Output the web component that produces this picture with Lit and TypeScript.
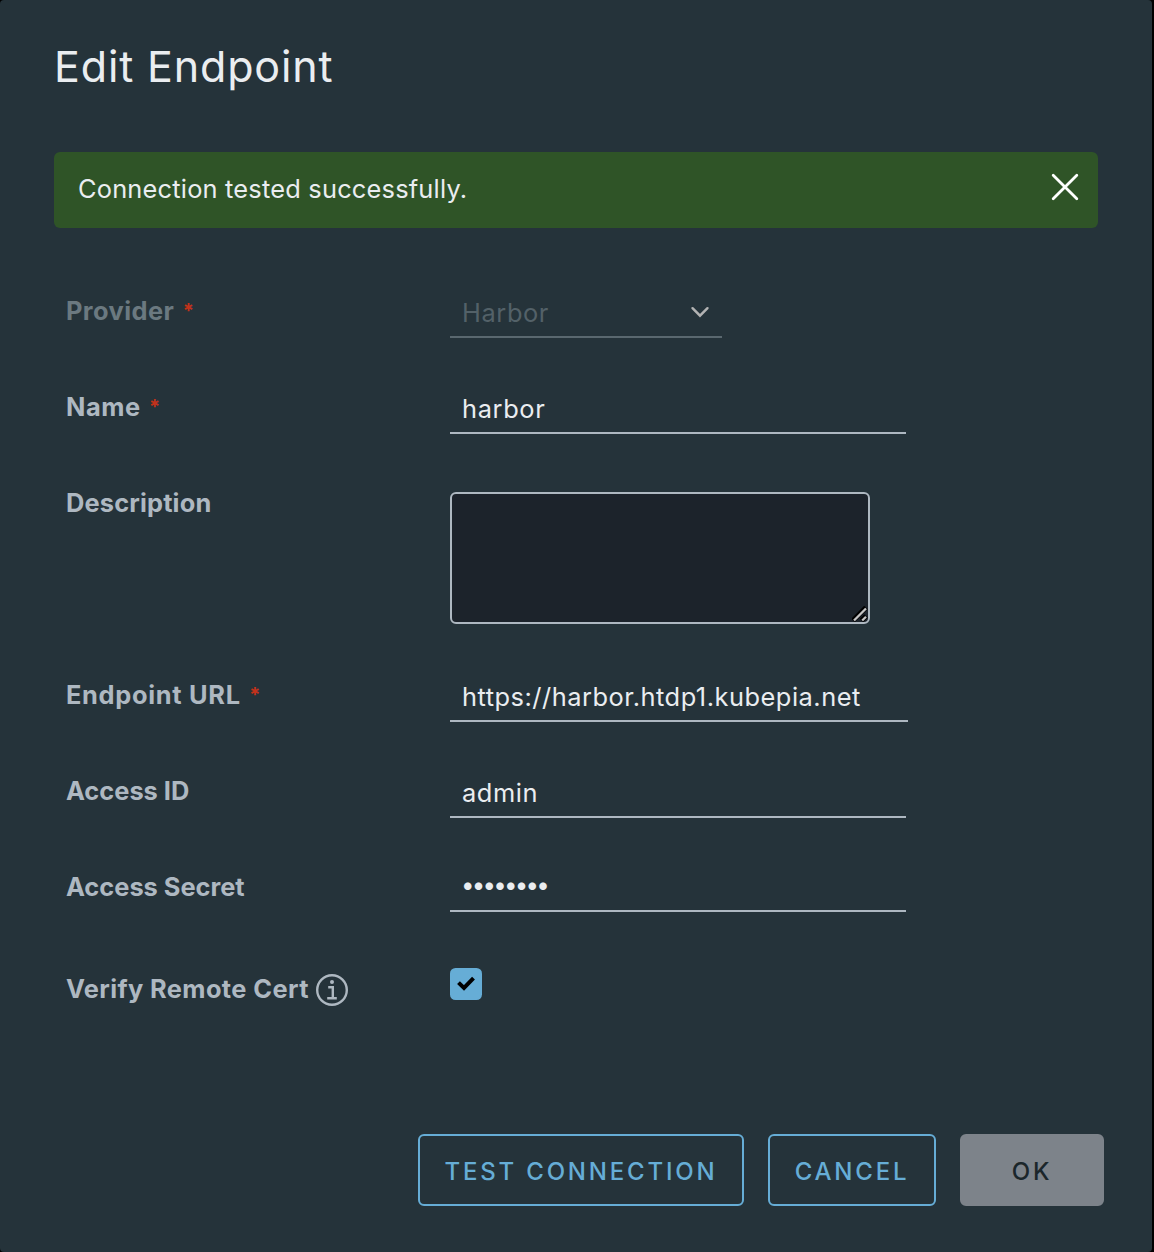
import { LitElement, html, css, nothing, TemplateResult } from "lit";
import { customElement, property } from "lit/decorators.js";

@customElement("form-row")
class FormRow extends LitElement {
  @property() label = "";
  @property({ type: Number }) tracking = 0;
  @property({ type: Boolean }) required = false;
  @property({ type: Boolean, reflect: true }) muted = false;

  static styles = css`
    :host { display: grid; grid-template-columns: 384px 1fr; align-items: start; padding-left: 12px; }
    .label { display: flex; align-items: center; height: 46px; font-size: 25.4px; line-height: 46px; font-weight: 660; color: #aeb8c1; white-space: nowrap; }
    :host([muted]) .label { color: #6b7980; }
    .star { color: #c2321b; font: 700 20px/46px "Inter", sans-serif; margin-left: 8.5px; height: 46px; }
  `;

  render() {
    return html`
      <div class="label">
        <span style="letter-spacing:${this.tracking}px">${this.label}</span>
        ${this.required ? html`<span class="star">*</span>` : nothing}
        <slot name="hint"></slot>
      </div>
      <slot></slot>
    `;
  }
}

@customElement("app-root")
class AppRoot extends LitElement {
  static styles = css`
    :host { display: block; background: #000; font-family: "Inter", sans-serif; color: #eaedf0; }
    * { box-sizing: border-box; }
    .modal { width: 1152px; height: 1252px; background: #25333a; border-radius: 4px; padding: 36px 48px 46px 54px; display: flex; flex-direction: column; }
    .title { margin: 0; height: 116px; font-size: 43px; font-weight: 400; line-height: 60px; letter-spacing: .85px; }
    .alert { width: 1044px; height: 76px; background: #2f5427; border-radius: 6px; display: flex; align-items: center; justify-content: space-between; padding: 0 18px 0 24px; font-size: 25.4px; font-weight: 430; letter-spacing: .2px; margin-bottom: 60px; }
    .alert span { padding-bottom: 4px; }
    .close { width: 30px; height: 30px; margin-bottom: 6px; }
    .row { height: 96px; }
    .row.tall { height: 192px; }
    .field { height: 50px; padding: 1px 12px; border: 0; border-bottom: 2px solid #aeb8c1; border-radius: 0; outline: 0; background: transparent; color: #eaedf0; font: 430 25.4px/46px "Inter", sans-serif; width: 456px; }
    .url { width: 458px; }
    .secret { height: 48px; padding: 0 11px; font-size: 24px; line-height: 42px; letter-spacing: -2.75px; }
    .select { width: 272px; padding: 2px 12px 0; display: flex; justify-content: space-between; align-items: center; color: #536168; border-color: #5a686f; letter-spacing: .6px; }
    .chevron { width: 20px; height: 14px; margin: 0 0 2px 0; }
    .area { position: relative; width: 420px; height: 132px; margin-top: 12px; }
    .area textarea { display: block; width: 100%; height: 100%; resize: none; background: #1c232b; border: 2px solid #aeb8c1; border-radius: 6px; outline: 0; }
    .grip { position: absolute; right: 2px; bottom: 2px; width: 16px; height: 16px; }
    .info { width: 32px; height: 32px; margin-left: 7px; margin-top: 1px; display: block; }
    .verify { padding-top: 6px; height: 96px; }
    .check { width: 32px; height: 32px; margin-top: 2px; display: block; }
    .actions { margin-top: auto; display: flex; justify-content: flex-end; gap: 24px; }
    .btn { height: 72px; border: 2px solid #66add6; border-radius: 6px; background: transparent; color: #66add6; font: 540 24px/64px "Inter", sans-serif; letter-spacing: 2.8px; padding: 4px 0 0; text-align: center; white-space: nowrap; }
    .test { width: 326px; }
    .cancel { width: 168px; }
    .ok { width: 144px; background: #7d838a; border-color: #7d838a; color: #1b262b; }
  `;

  private input(value: string, tracking: number, kind = ""): TemplateResult {
    return html`<input class="field ${kind}" .value=${value} style="letter-spacing:${tracking}px" />`;
  }

  render() {
    return html`
      <div class="modal">
        <h3 class="title">Edit Endpoint</h3>
        <div class="alert">
          <span>Connection tested successfully.</span>
          <svg class="close" viewBox="0 0 30 30" fill="none" stroke="#fff" stroke-width="2.8" stroke-linecap="round"><path d="M3.2 3.2 26.8 26.8M26.8 3.2 3.2 26.8" /></svg>
        </div>
        <form-row class="row" label="Provider" tracking="0.42" required muted>
          <div class="field select">
            <span>Harbor</span>
            <svg class="chevron" viewBox="0 0 20 14" fill="none" stroke="#b3b3b3" stroke-width="2.4" stroke-linecap="round"><path d="M2.5 3.2 10 10.7 17.5 3.2" /></svg>
          </div>
        </form-row>
        <form-row class="row" label="Name" tracking="0.55" required>${this.input("harbor", 0.65)}</form-row>
        <form-row class="row tall" label="Description" tracking="0.16">
          <div class="area">
            <textarea></textarea>
            <svg class="grip" viewBox="0 0 16 16" fill="none"><path d="M1 14.5 14 1.5M9.5 14.5 14 10" stroke="#000" stroke-width="5" /><path d="M2 14.5 14 2.5M10.2 14.5 14 10.7" stroke="#c4c4c4" stroke-width="2.3" /></svg>
          </div>
        </form-row>
        <form-row class="row" label="Endpoint URL" tracking="0.69" required>${this.input("https://harbor.htdp1.kubepia.net", 0.51, "url")}</form-row>
        <form-row class="row" label="Access ID" tracking="0">${this.input("admin", 0.6)}</form-row>
        <form-row class="row" label="Access Secret" tracking="0">
          <div class="field secret">••••••••</div>
        </form-row>
        <form-row class="verify" label="Verify Remote Cert" tracking="0.39">
          <svg slot="hint" class="info" viewBox="0 0 32 32" fill="none" stroke="#aeb8c1" stroke-width="2.4"><circle cx="16" cy="16" r="14.8" /><circle cx="16" cy="8" r="2" fill="#aeb8c1" stroke="none" /><path d="M12.2 13.3H16.8V24M11.2 24.2H20.8" /></svg>
          <svg class="check" viewBox="0 0 32 32"><rect width="32" height="32" rx="5.5" fill="#66add6" /><path d="M8.5 14.6 14 20 23.5 10.2" fill="none" stroke="#000" stroke-width="4" /></svg>
        </form-row>
        <div class="actions">
          <button class="btn test">TEST CONNECTION</button>
          <button class="btn cancel">CANCEL</button>
          <button class="btn ok">OK</button>
        </div>
      </div>
    `;
  }
}
